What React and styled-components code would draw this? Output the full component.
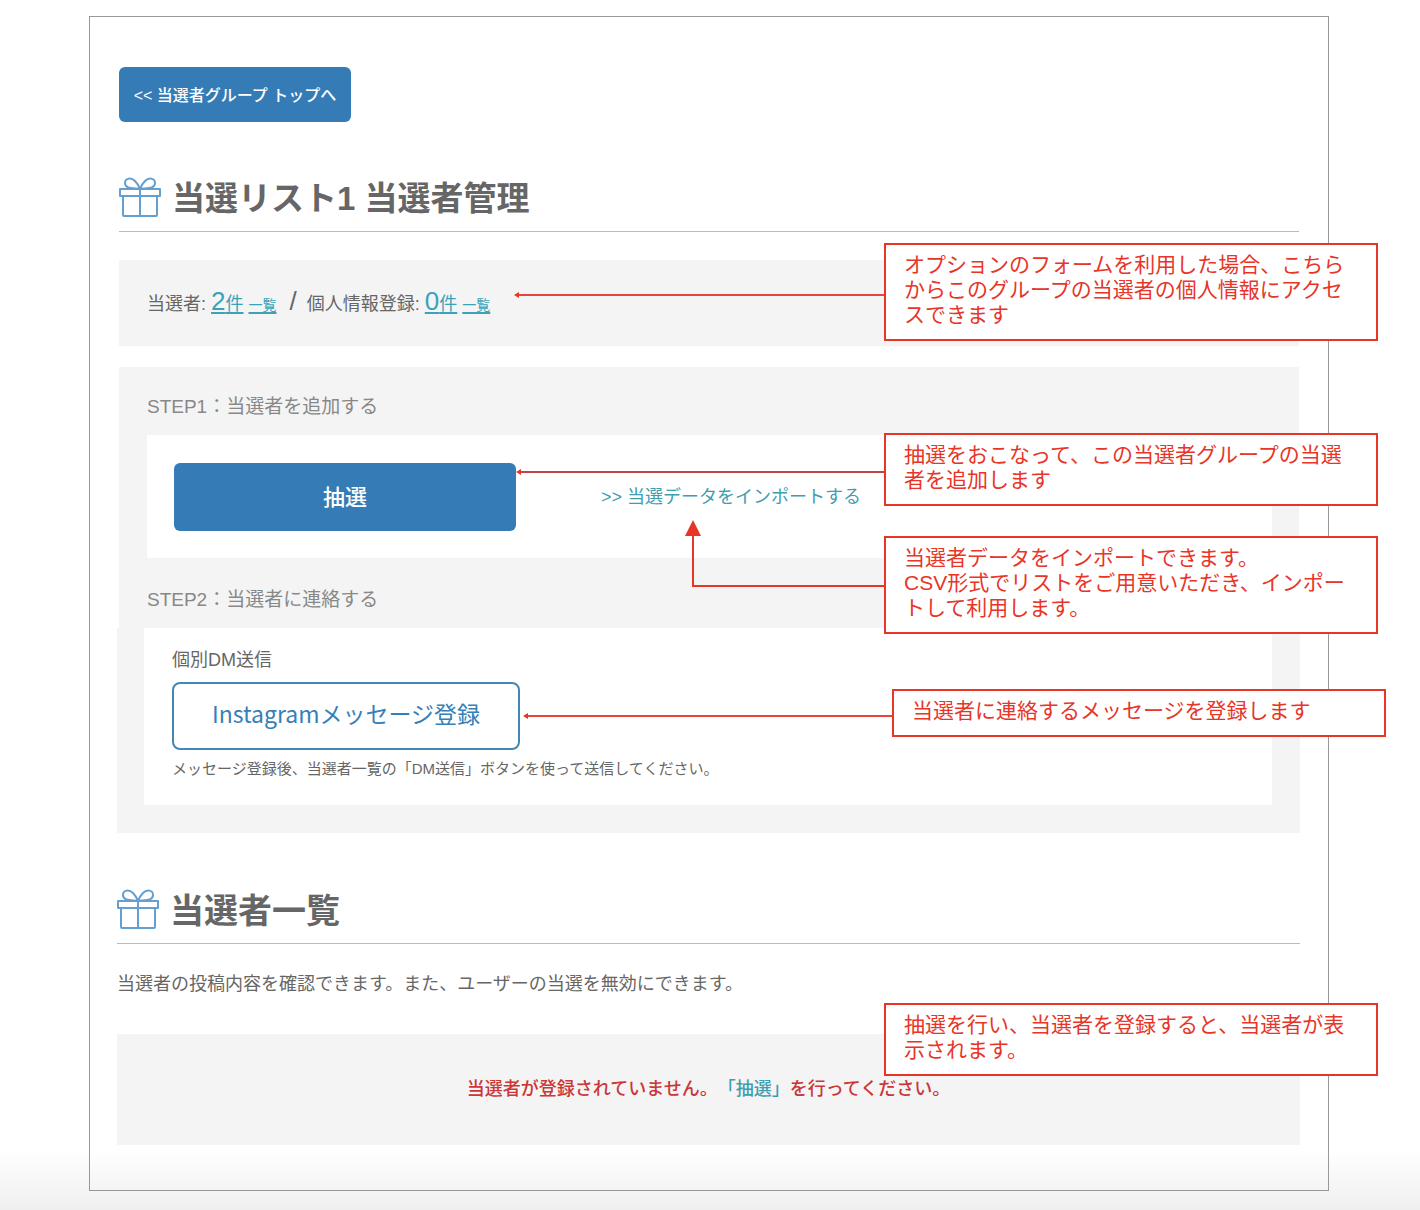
import React from "react";
import styled, { createGlobalStyle } from "styled-components";

const GlobalStyle = createGlobalStyle`
  * {
    box-sizing: border-box;
  }
  body {
    margin: 0;
    color: #666;
    font-family: "Liberation Sans", "Noto Sans CJK JP", sans-serif;
    font-size: 18px;
    line-height: 24px;
    text-spacing-trim: space-all;
  }
  h1, h2, h3, p {
    margin: 0;
    font-weight: 400;
  }
`;

const Page = styled.div`
  display: flow-root;
  min-height: 100vh;
  background: linear-gradient(to bottom, #fff calc(100% - 60px), #efefef);
`;

const Sheet = styled.main`
  margin: 16px 91px 19px 89px;
  padding: 50px 29px 45px;
  border: 1px solid #999;
`;

// the lower half of the sheet is slightly wider than the upper one
const Wide = styled.div`
  margin: 0 -1px 0 -2px;
`;

const WinnerSection = styled(Wide)`
  padding-top: 1px;
`;

const BackButton = styled.button`
  display: block;
  width: 232px;
  height: 55px;
  padding: 0 0 2px;
  border: none;
  border-radius: 6px;
  background-color: #357cb6;
  color: #fff;
  font-family: inherit;
  font-size: 16px;
  font-weight: 500;
  cursor: pointer;
`;

const Heading = styled.div`
  display: flex;
  align-items: center;
  gap: 11px;
  margin-top: 54px;
  padding-bottom: 13px;
  border-bottom: 1px solid #bbb;
`;

const Title = styled.h1`
  padding-top: 4px;
  font-size: ${({ $size }) => $size}px;
  font-weight: 700;
  line-height: 38px;
`;

const GiftSvg = styled.svg`
  width: 42px;
  height: 42px;
  fill: none;
  stroke: #659fd0;
  stroke-width: 2;
  stroke-linejoin: round;
`;

const Stats = styled.section`
  position: relative;
  margin-top: 28px;
  padding: 26px 28px;
  background-color: #f4f4f4;
`;

const StatsLine = styled.p`
  line-height: 30px;
`;

const Slash = styled.span`
  margin: 0 10px 0 8px;
  font-size: 26px;
`;

const StatLink = styled.a`
  color: #3ba2b8;
  font-size: ${({ $small }) => ($small ? 14 : 18)}px;
  text-decoration-thickness: 2px;
  text-underline-offset: 2px;
`;

const Count = styled.span`
  font-size: 26px;
`;

const Steps = styled.section`
  margin-top: 21px;
  padding: 28px 27px 0 28px;
  background-color: #f4f4f4;
`;

const StepsLower = styled(Wide)`
  padding: 0 28px 28px 27px;
  background-color: #f4f4f4;
`;

const StepTitle = styled.h2`
  padding: ${({ $next }) => ($next ? "30px 0 16px" : "0 0 16px")};
  color: #888;
  font-size: 19px;
`;

const DrawCard = styled.div`
  position: relative;
  display: flex;
  align-items: center;
  gap: 85px;
  padding: 28px 27px 27px;
  background-color: #fff;
`;

const DrawButton = styled.button`
  width: 342px;
  height: 68px;
  padding: 0 0 4px;
  border: none;
  border-radius: 6px;
  background-color: #357cb6;
  color: #fff;
  font-family: inherit;
  font-size: 22px;
  font-weight: 500;
  cursor: pointer;
`;

const ImportLink = styled.a`
  color: #3f9db0;
  text-decoration: none;
`;

const MessageCard = styled.div`
  position: relative;
  padding: 20px 28px 24px;
  background-color: #fff;
`;

const MessageTitle = styled.h3`
  font-size: 18px;
`;

const MessageButton = styled.button`
  display: block;
  width: 348px;
  height: 68px;
  margin: 10px 0 7px;
  padding: 0 0 6px;
  border: 2px solid #4189b4;
  border-radius: 8px;
  background-color: #fff;
  color: #3580b8;
  font-family: "Noto Sans CJK JP", sans-serif;
  font-size: 23px;
  cursor: pointer;
`;

const Small = styled.p`
  font-size: 15px;
`;

const Description = styled.p`
  margin-top: 28px;
`;

const Empty = styled.section`
  position: relative;
  margin-top: 38px;
  padding: 43px 28px 44px;
  background-color: #f4f4f4;
  color: #cb3638;
  text-align: center;
`;

const EmptyText = styled.p`
  font-weight: 500;
`;

const Callout = styled.aside`
  position: absolute;
  z-index: 1;
  top: ${({ $top }) => $top}px;
  left: ${({ $left }) => $left}px;
  width: 494px;
  padding: 7px 18px 12px;
  border: 2px solid #e73528;
  background-color: #fff;
  color: #e73528;
  font-size: 21px;
  line-height: 25px;
  text-align: left;
`;

const ArrowSvg = styled.svg`
  position: absolute;
  top: ${({ $top }) => $top}px;
  right: calc(100% + 2px);
`;

const Gift = () => (
  <GiftSvg viewBox="0 0 42 42" aria-hidden="true">
    <rect x="1" y="13" width="40" height="7" />
    <path d="M4 20V39Q4 40 5 40H37Q38 40 38 39V20M21 13V40" />
    <path d="M21 13C14 12 6 13 6 7C6 2 12 1 16 5C19 8 20 10 21 13ZM21 13C28 12 36 13 36 7C36 2 30 1 26 5C23 8 22 10 21 13Z" />
  </GiftSvg>
);

const Arrow = ({ top, width, color = "#e5453b" }) => (
  <ArrowSvg $top={top} width={width} height="8" aria-hidden="true">
    <path d={`M3 4H${width}`} stroke={color} strokeWidth="2" />
    <path d="M0 4L5 1V7Z" fill="#e73528" />
  </ArrowSvg>
);

const ElbowArrow = ({ top }) => (
  <ArrowSvg $top={top} width="199" height="68" aria-hidden="true">
    <path d="M199 66H8V14" fill="none" stroke="#e73528" strokeWidth="2" />
    <path d="M8 0L16 16H0Z" fill="#e73528" />
  </ArrowSvg>
);

const App = () => {
  return (
    <Page>
      <GlobalStyle />
      <Sheet>
        <BackButton type="button">&lt;&lt; 当選者グループ トップへ</BackButton>
        <Heading>
          <Gift />
          <Title $size={33}>当選リスト1 当選者管理</Title>
        </Heading>
        <Stats>
          <StatsLine>
            当選者:{" "}
            <StatLink href="#winners">
              <Count>2</Count>件
            </StatLink>{" "}
            <StatLink href="#winners" $small>
              一覧
            </StatLink>{" "}
            <Slash>/</Slash>
            個人情報登録:{" "}
            <StatLink href="#profiles">
              <Count>0</Count>件
            </StatLink>{" "}
            <StatLink href="#profiles" $small>
              一覧
            </StatLink>
          </StatsLine>
          <Callout $top={-17} $left={765}>
            オプションのフォームを利用した場合、こちらからこのグループの当選者の個人情報にアクセスできます
            <Arrow top={46} width={370} />
          </Callout>
        </Stats>
        <Steps>
          <StepTitle>STEP1：当選者を追加する</StepTitle>
          <DrawCard>
            <DrawButton type="button">抽選</DrawButton>
            <ImportLink href="#import">&gt;&gt; 当選データをインポートする</ImportLink>
            <Callout $top={-2} $left={737}>
              抽選をおこなって、この当選者グループの当選者を追加します
              <Arrow top={33} width={368} color="#c04448" />
            </Callout>
            <Callout $top={101} $left={737}>
              当選者データをインポートできます。
              <br />
              CSV形式でリストをご用意いただき、インポートして利用します。
              <ElbowArrow top={-18} />
            </Callout>
          </DrawCard>
          <StepTitle $next>STEP2：当選者に連絡する</StepTitle>
        </Steps>
        <StepsLower>
          <MessageCard>
            <MessageTitle>個別DM送信</MessageTitle>
            <MessageButton type="button">Instagramメッセージ登録</MessageButton>
            <Small>
              メッセージ登録後、当選者一覧の「DM送信」ボタンを使って送信してください。
            </Small>
            <Callout $top={61} $left={748}>
              当選者に連絡するメッセージを登録します
              <Arrow top={21} width={369} />
            </Callout>
          </MessageCard>
        </StepsLower>
        <WinnerSection id="winners">
          <Heading>
            <Gift />
            <Title as="h2" $size={34}>
              当選者一覧
            </Title>
          </Heading>
          <Description>
            当選者の投稿内容を確認できます。また、ユーザーの当選を無効にできます。
          </Description>
          <Empty>
            <EmptyText>
              当選者が登録されていません。
              <ImportLink href="#draw">「抽選」</ImportLink>
              を行ってください。
            </EmptyText>
            <Callout $top={-31} $left={767}>
              抽選を行い、当選者を登録すると、当選者が表示されます。
            </Callout>
          </Empty>
        </WinnerSection>
      </Sheet>
    </Page>
  );
};

export default App;
